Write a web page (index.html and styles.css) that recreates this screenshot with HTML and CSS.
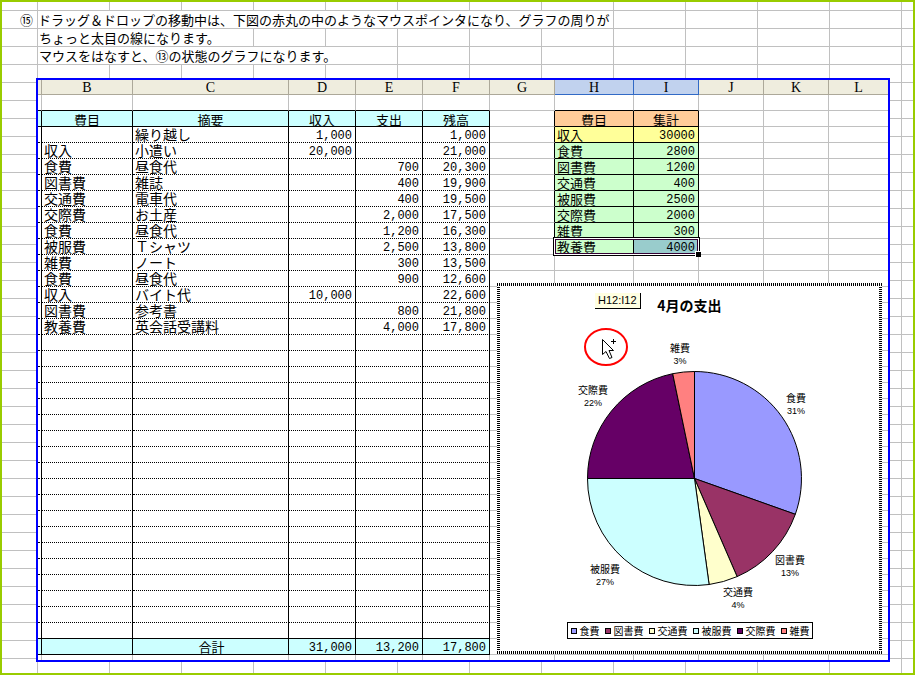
FILE: index.html
```
<!DOCTYPE html>
<html lang="ja">
<head>
<meta charset="utf-8">
<title>4月の支出</title>
<link rel="stylesheet" href="styles.css">
</head>

<body>
<div class="page">

<div class="note"><span class="num">⑮</span><p class="w8">ドラッグ＆ドロップの移動中は、下図の赤丸の中のようなマウスポインタになり、グラフの周りが</p></div>
<div class="note"><span class="num"></span><p class="w3">ちょっと太目の線になります。</p></div>
<div class="note"><span class="num"></span><p class="w5">マウスをはなすと、⑬の状態のグラフになります。</p></div>

<div class="sheet">
<table>
<colgroup>
  <col class="a"><col class="b"><col class="c"><col class="d"><col class="d"><col class="d">
  <col class="g"><col class="h"><col class="g"><col class="g"><col class="g"><col>
</colgroup>
<thead>
<tr><th></th><th>B</th><th>C</th><th>D</th><th>E</th><th>F</th><th>G</th><th class="on">H</th><th class="on">I</th><th>J</th><th>K</th><th>L</th></tr>
</thead>
<tbody>
<tr class="blank"><td></td><td></td><td></td><td></td><td></td><td></td><td></td><td></td><td></td><td></td><td></td><td></td></tr>
<tr class="ledger title"><td></td><td>費目</td><td>摘要</td><td>収入</td><td>支出</td><td>残高</td><td class="pre"></td><td class="sum top">費目</td><td class="sum top">集計</td><td></td><td></td><td></td></tr>
<tr class="ledger"><td></td><td></td><td>繰り越し</td><td>1,000</td><td></td><td>1,000</td><td class="pre"></td><td class="sum in">収入</td><td class="sum in">30000</td><td></td><td></td><td></td></tr>
<tr class="ledger"><td></td><td>収入</td><td>小遣い</td><td>20,000</td><td></td><td>21,000</td><td class="pre"></td><td class="sum">食費</td><td class="sum">2800</td><td></td><td></td><td></td></tr>
<tr class="ledger"><td></td><td>食費</td><td>昼食代</td><td></td><td>700</td><td>20,300</td><td class="pre"></td><td class="sum">図書費</td><td class="sum">1200</td><td></td><td></td><td></td></tr>
<tr class="ledger"><td></td><td>図書費</td><td>雑誌</td><td></td><td>400</td><td>19,900</td><td class="pre"></td><td class="sum">交通費</td><td class="sum">400</td><td></td><td></td><td></td></tr>
<tr class="ledger"><td></td><td>交通費</td><td>電車代</td><td></td><td>400</td><td>19,500</td><td class="pre"></td><td class="sum">被服費</td><td class="sum">2500</td><td></td><td></td><td></td></tr>
<tr class="ledger"><td></td><td>交際費</td><td>お土産</td><td></td><td>2,000</td><td>17,500</td><td class="pre"></td><td class="sum">交際費</td><td class="sum">2000</td><td></td><td></td><td></td></tr>
<tr class="ledger"><td></td><td>食費</td><td>昼食代</td><td></td><td>1,200</td><td>16,300</td><td class="pre"></td><td class="sum">雑費</td><td class="sum">300</td><td></td><td></td><td></td></tr>
<tr class="ledger"><td></td><td>被服費</td><td>Ｔシャツ</td><td></td><td>2,500</td><td>13,800</td><td class="pre"></td><td class="sum from">教養費<i class="select"></i></td><td class="sum picked">4000</td><td></td><td></td><td></td></tr>
<tr class="ledger"><td></td><td>雑費</td><td>ノート</td><td></td><td>300</td><td>13,500</td><td></td><td></td><td></td><td></td><td></td><td></td></tr>
<tr class="ledger"><td></td><td>食費</td><td>昼食代</td><td></td><td>900</td><td>12,600</td><td></td><td></td><td></td><td></td><td></td><td></td></tr>
<tr class="ledger"><td></td><td>収入</td><td>バイト代</td><td>10,000</td><td></td><td>22,600</td><td colspan="6"></td></tr>
<tr class="ledger"><td></td><td>図書費</td><td>参考書</td><td></td><td>800</td><td>21,800</td><td colspan="6"></td></tr>
<tr class="ledger"><td></td><td>教養費</td><td>英会話受講料</td><td></td><td>4,000</td><td>17,800</td><td colspan="6"></td></tr>
<tr class="ledger"><td></td><td></td><td></td><td></td><td></td><td></td><td colspan="6"></td></tr>
<tr class="ledger"><td></td><td></td><td></td><td></td><td></td><td></td><td colspan="6"></td></tr>
<tr class="ledger"><td></td><td></td><td></td><td></td><td></td><td></td><td colspan="6"></td></tr>
<tr class="ledger"><td></td><td></td><td></td><td></td><td></td><td></td><td colspan="6"></td></tr>
<tr class="ledger"><td></td><td></td><td></td><td></td><td></td><td></td><td colspan="6"></td></tr>
<tr class="ledger"><td></td><td></td><td></td><td></td><td></td><td></td><td colspan="6"></td></tr>
<tr class="ledger"><td></td><td></td><td></td><td></td><td></td><td></td><td colspan="6"></td></tr>
<tr class="ledger"><td></td><td></td><td></td><td></td><td></td><td></td><td colspan="6"></td></tr>
<tr class="ledger"><td></td><td></td><td></td><td></td><td></td><td></td><td colspan="6"></td></tr>
<tr class="ledger"><td></td><td></td><td></td><td></td><td></td><td></td><td colspan="6"></td></tr>
<tr class="ledger"><td></td><td></td><td></td><td></td><td></td><td></td><td colspan="6"></td></tr>
<tr class="ledger"><td></td><td></td><td></td><td></td><td></td><td></td><td colspan="6"></td></tr>
<tr class="ledger"><td></td><td></td><td></td><td></td><td></td><td></td><td colspan="6"></td></tr>
<tr class="ledger"><td></td><td></td><td></td><td></td><td></td><td></td><td colspan="6"></td></tr>
<tr class="ledger"><td></td><td></td><td></td><td></td><td></td><td></td><td colspan="6"></td></tr>
<tr class="ledger"><td></td><td></td><td></td><td></td><td></td><td></td><td colspan="6"></td></tr>
<tr class="ledger"><td></td><td></td><td></td><td></td><td></td><td></td><td colspan="6"></td></tr>
<tr class="ledger"><td></td><td></td><td></td><td></td><td></td><td></td><td colspan="6"></td></tr>
<tr class="ledger last"><td></td><td></td><td></td><td></td><td></td><td></td><td colspan="6"></td></tr>
<tr class="ledger total"><td></td><td></td><td>合計</td><td>31,000</td><td>13,200</td><td>17,800</td><td colspan="6"></td></tr>
<tr class="end"><td></td><td></td><td></td><td></td><td></td><td></td><td></td><td></td><td></td><td></td><td></td><td></td></tr>
</tbody>
</table>

<!-- chart floating over the cells -->
<figure class="chart">
  <figcaption>4月の支出</figcaption>
  <svg viewBox="500 316 379 306" role="img" aria-label="4月の支出">
    <g stroke="#000" stroke-width="1" stroke-linejoin="round">
      <path fill="#9999ff" d="M694.5 478.5V371.5A107 107 0 0 1 795.3 514.3Z"/>
      <path fill="#993366" d="M694.5 478.5L795.3 514.3A107 107 0 0 1 737.1 576.6Z"/>
      <path fill="#ffffcc" d="M694.5 478.5L737.1 576.6A107 107 0 0 1 709.1 584.5Z"/>
      <path fill="#ccffff" d="M694.5 478.5L709.1 584.5A107 107 0 0 1 587.5 478.5Z"/>
      <path fill="#660066" d="M694.5 478.5H587.5A107 107 0 0 1 672.7 373.7Z"/>
      <path fill="#ff8080" d="M694.5 478.5L672.7 373.7A107 107 0 0 1 694.5 371.5Z"/>
    </g>
    <g class="label">
      <text x="796" y="402">食費</text><text class="pct" x="796" y="414">31%</text>
      <text x="790" y="564">図書費</text><text class="pct" x="790" y="576">13%</text>
      <text x="738" y="596">交通費</text><text class="pct" x="738" y="608">4%</text>
      <text x="605" y="573">被服費</text><text class="pct" x="605" y="585">27%</text>
      <text x="593" y="394">交際費</text><text class="pct" x="593" y="406">22%</text>
      <text x="680" y="352">雑費</text><text class="pct" x="680" y="364">3%</text>
    </g>
    <!-- mouse pointer in the red circle -->
    <ellipse cx="606" cy="347" rx="21" ry="18" fill="none" stroke="#f00" stroke-width="2"/>
    <path fill="#fff" stroke="#000" d="M602.5 339.5V354.5L606 351.5L609.5 358.5L612 357.5L609 350.5H613.5Z"/>
    <path stroke="#000" d="M611 341.5H616M613.5 339V344"/>
  </svg>
  <ul class="legend">
    <li class="food">食費</li>
    <li class="book">図書費</li>
    <li class="fare">交通費</li>
    <li class="wear">被服費</li>
    <li class="social">交際費</li>
    <li class="misc">雑費</li>
  </ul>
  <span class="tip">H12:I12</span>
</figure>
</div>

</div>
</body>
</html>
```
FILE: styles.css
```
*, *::before, *::after { box-sizing: border-box; }
body { margin: 0; background: #fff; color: #000; font-family: "Liberation Mono", "Noto Sans CJK JP", monospace; }

/* worksheet behind everything */
.page {
  min-height: 100vh;
  padding: 9px 0 11px;
  border: 2px solid #99cc00;
  background:
    linear-gradient(90deg, #c0c0c0 1px, transparent 1px) 35px 0 / 72px 18px,
    linear-gradient(#c0c0c0 1px, transparent 1px) 0 8px / 72px 18px;
}

.note { display: flex; height: 18px; font: 13px/17px "Noto Sans CJK JP", sans-serif; }
.note .num { width: 36px; padding-right: 5px; text-align: right; }
.note p { height: 17px; margin: 0; background: #fff; white-space: nowrap; }
.w3 { width: 215px; padding-left: 1px; }
.w5 { width: 359px; padding-left: 1px; }
.w8 { width: 575px; }

/* captured sheet */
.sheet { position: relative; margin: 13px 23px 0 34px; border: 2px solid #0000ff; background: #fff; }
table { width: 100%; table-layout: fixed; border-collapse: separate; border-spacing: 0; }
.a { width: 4px; }
.b { width: 91px; }
.c { width: 156px; }
.d { width: 67px; }
.g { width: 65px; }
.h { width: 79px; }

th { height: 15px; padding: 2px 0 0; border: solid #aca899; border-width: 0 1px 1px 0; background: #efedde; font: 14px/12px "Liberation Serif", serif; }
th.on { border-color: #316ac6; background: #c1d2ee; }
td { height: 16px; padding: 3px 0 0; border: solid #c0c0c0; border-width: 0 1px 1px 0; font-size: 12px; line-height: 12px; white-space: nowrap; }
th:last-child, td:last-child { border-right: 0; }
.blank td:nth-child(-n+6), .blank td:nth-child(8), .blank td:nth-child(9) { border-bottom-color: #000; }
.end td { height: 5px; padding: 0; line-height: 0; border-bottom: 0; }

.ledger td:nth-child(-n+6) { border-right-color: #000; border-bottom: 1px dotted #000; }
.ledger td:nth-child(2), .ledger td:nth-child(3) { padding: 1px 0 1px 2px; font: 14px/13px "Noto Sans CJK JP", sans-serif; }
.ledger td:nth-child(4), .ledger td:nth-child(5), .ledger td:nth-child(6) { padding-right: 3px; text-align: right; }
.title td:nth-child(-n+6), .last td:nth-child(-n+6), .total td:nth-child(-n+6) { border-bottom-style: solid; }
.title td:nth-child(-n+6), .total td:nth-child(-n+6) { background: #ccffff; }
.title td:nth-child(n+2):nth-child(-n+6) { padding: 2px 0 0; text-align: center; font: 13px/13px "Noto Sans CJK JP", sans-serif; }
.total td:nth-child(3) { text-align: center; font-size: 13px; }

td.pre { border-right-color: #000; }
td.sum { padding-right: 3px; border-color: #000; background: #ccffcc; text-align: right; }
td.sum:nth-child(8) { padding: 1px 0 1px 2px; text-align: left; font: 13px/13px "Noto Sans CJK JP", sans-serif; }
td.sum.in { background: #ffff99; }
td.sum.top:nth-child(n) { padding: 2px 0 0; background: #ffcc99; text-align: center; font: 13px/13px "Noto Sans CJK JP", sans-serif; }
td.sum.picked { background: #99cccc; }
td.from { position: relative; }

.select { position: absolute; z-index: 1; top: 0; left: 0; width: 143px; height: 15px; border: 1px solid #330033; outline: 1px solid #fff; box-shadow: 0 0 0 2px #000; }
.select::after { content: ""; position: absolute; right: -4px; bottom: -4px; width: 6px; height: 6px; border: solid #fff; border-width: 1px 0 0 1px; background: #000; }

/* chart, 3px hatched edge */
.chart {
  position: absolute; z-index: 2; top: 203px; right: 6px; bottom: 6px; left: 459px;
  display: flex; flex-direction: column; align-items: center;
  margin: 0; padding: 3px;
  background:
    repeating-linear-gradient(90deg, #000 0 1px, #fff 1px 2px) 0 0 / 100% 3px no-repeat,
    repeating-linear-gradient(90deg, #000 0 1px, #fff 1px 2px) 0 100% / 100% 3px no-repeat,
    repeating-linear-gradient(#000 0 1px, #fff 1px 2px) 0 0 / 3px 100% no-repeat,
    repeating-linear-gradient(#000 0 1px, #fff 1px 2px) 100% 0 / 3px 100% no-repeat,
    #fff;
}
figcaption { height: 30px; padding-top: 9px; font: bold 14px/20px "Noto Sans CJK JP", sans-serif; }
.chart svg { display: block; width: 100%; height: 306px; }
.label { font: 10px "Noto Sans CJK JP", sans-serif; text-anchor: middle; }
.pct { font: 9px "Liberation Sans", sans-serif; }
.legend { display: flex; gap: 5px; height: 17px; margin: 0; padding: 0 2px 0 3px; border: 1px solid #000; list-style: none; font: 10px/15px "Noto Sans CJK JP", sans-serif; }
.legend li { display: flex; align-items: center; gap: 3px; white-space: nowrap; }
.legend li::before { content: ""; width: 6px; height: 6px; border: 1px solid #000; }
.food::before { background: #9999ff; }
.book::before { background: #993366; }
.fare::before { background: #ffffcc; }
.wear::before { background: #ccffff; }
.social::before { background: #660066; }
.misc::before { background: #ff8080; }

.tip { position: absolute; top: 10px; left: 98px; padding: 0 3px; border: solid #000; border-width: 0 1px 1px 0; background: #ffffe1; font: 11px/15px "Liberation Sans", sans-serif; }
```
